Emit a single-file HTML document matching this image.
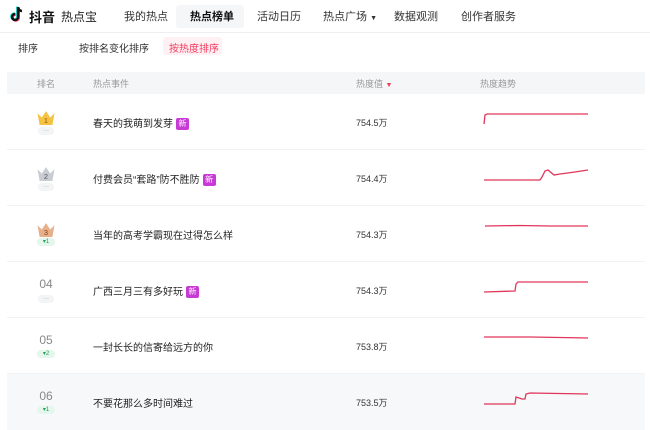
<!DOCTYPE html>
<html><head><meta charset="utf-8"><style>
*{margin:0;padding:0;box-sizing:border-box}
body{width:650px;height:430px;background:#fff;font-family:"Liberation Sans","Noto Sans CJK SC",sans-serif;color:#222;position:relative;overflow:hidden}
.a{position:absolute;white-space:nowrap}
.hdr{position:absolute;left:0;top:0;width:650px;height:33px;border-bottom:1px solid #eceef1}
.nav{font-size:11px;color:#333;top:8px}
.row{position:absolute;left:7px;width:638px;height:56px;border-bottom:1px solid #f1f2f4}
.ev{font-size:10px;color:#222}
.hv{font-size:9px;color:#333}
.new{display:inline-block;background:#c83ad6;color:#fff;font-size:8px;width:13px;height:12px;line-height:12px;text-align:center;border-radius:2px;margin-left:3px;vertical-align:1px}
.bd{position:absolute;width:16px;height:8px;border-radius:4px;background:#f3f4f6;font-size:6px;color:#999;text-align:center;line-height:8px}
.up{background:#e5f7ec;color:#1fa055}
.num{font-size:12px;color:#888;text-align:center;width:24px}
</style></head><body>
<div class="hdr"></div>
<svg class="a" style="left:10px;top:6px" width="14" height="17" viewBox="0 0 14 17"><path d="M8 1v10a3 3 0 1 1-3-3" fill="none" stroke="#25f4ee" stroke-width="2.4" transform="translate(-0.8,-0.5)"/><path d="M8 1v10a3 3 0 1 1-3-3" fill="none" stroke="#fe2c55" stroke-width="2.4" transform="translate(0.8,0.5)"/><path d="M8 1v10a3 3 0 1 1-3-3M8 1c0 2 2 4 4 4" fill="none" stroke="#111" stroke-width="2.4"/></svg>
<div class="a" style="left:29px;top:7px;font-size:13px;font-weight:bold;color:#111">抖音</div>
<div class="a" style="left:61px;top:8px;font-size:12px;color:#222">热点宝</div>
<div class="a nav" style="left:124px">我的热点</div>
<div class="a" style="left:176px;top:5px;width:68px;height:23px;background:#f5f6f8;border-radius:3px"></div>
<div class="a nav" style="left:190px;font-weight:bold;color:#111">热点榜单</div>
<div class="a nav" style="left:257px">活动日历</div>
<div class="a nav" style="left:323px">热点广场 <span style="font-size:7px">▼</span></div>
<div class="a nav" style="left:394px">数据观测</div>
<div class="a nav" style="left:461px">创作者服务</div>
<div class="a" style="left:18px;top:40px;font-size:10px;color:#333">排序</div>
<div class="a" style="left:79px;top:40px;font-size:10px;color:#333">按排名变化排序</div>
<div class="a" style="left:163px;top:37px;width:59px;height:18px;background:#fff1f3;border-radius:3px"></div>
<div class="a" style="left:169px;top:40px;font-size:10px;color:#f23a5e">按热度排序</div>
<div class="a" style="left:7px;top:72px;width:638px;height:22px;background:#f5f6f8"></div>
<div class="a" style="left:37px;top:77px;font-size:9px;color:#999">排名</div>
<div class="a" style="left:93px;top:77px;font-size:9px;color:#999">热点事件</div>
<div class="a" style="left:356px;top:77px;font-size:9px;color:#999">热度值 <span style="color:#f23a5e;font-size:7px">▼</span></div>
<div class="a" style="left:480px;top:77px;font-size:9px;color:#999">热度趋势</div>

<div class="row" style="top:94px"></div>
<div class="row" style="top:150px"></div>
<div class="row" style="top:206px"></div>
<div class="row" style="top:262px"></div>
<div class="row" style="top:318px"></div>
<div class="row" style="top:374px;background:#f7f8fa;border:none"></div>

<svg class="a" style="left:35px;top:109px" width="22" height="17" viewBox="0 0 20 16"><path d="M2 4l4 4 4-6 4 6 4-4-2 11H4z" fill="#f5c242"/><text x="10" y="13" font-size="7" text-anchor="middle" fill="#8a5a00" font-family="Liberation Sans">1</text></svg>
<div class="bd" style="left:38px;top:127px">···</div>
<svg class="a" style="left:35px;top:165px" width="22" height="17" viewBox="0 0 20 16"><path d="M2 4l4 4 4-6 4 6 4-4-2 11H4z" fill="#c9ccd2"/><text x="10" y="13" font-size="7" text-anchor="middle" fill="#555" font-family="Liberation Sans">2</text></svg>
<div class="bd" style="left:38px;top:183px">···</div>
<svg class="a" style="left:35px;top:221px" width="22" height="17" viewBox="0 0 20 16"><path d="M2 4l4 4 4-6 4 6 4-4-2 11H4z" fill="#e8b08a"/><text x="10" y="13" font-size="7" text-anchor="middle" fill="#7a4020" font-family="Liberation Sans">3</text></svg>
<div class="bd up" style="left:37px;top:238px;width:18px">▾1</div>
<div class="a num" style="left:34px;top:277px">04</div>
<div class="bd" style="left:38px;top:295px">···</div>
<div class="a num" style="left:34px;top:333px">05</div>
<div class="bd up" style="left:37px;top:350px;width:18px">▾2</div>
<div class="a num" style="left:34px;top:389px">06</div>
<div class="bd up" style="left:37px;top:406px;width:18px">▾1</div>

<div class="a ev" style="left:93px;top:115px">春天的我萌到发芽<span class="new">新</span></div>
<div class="a ev" style="left:93px;top:171px">付费会员“套路”防不胜防<span class="new">新</span></div>
<div class="a ev" style="left:93px;top:227px">当年的高考学霸现在过得怎么样</div>
<div class="a ev" style="left:93px;top:283px">广西三月三有多好玩<span class="new">新</span></div>
<div class="a ev" style="left:93px;top:339px">一封长长的信寄给远方的你</div>
<div class="a ev" style="left:93px;top:395px">不要花那么多时间难过</div>

<div class="a hv" style="left:356px;top:116px">754.5万</div>
<div class="a hv" style="left:356px;top:172px">754.4万</div>
<div class="a hv" style="left:356px;top:228px">754.3万</div>
<div class="a hv" style="left:356px;top:284px">754.3万</div>
<div class="a hv" style="left:356px;top:340px">753.8万</div>
<div class="a hv" style="left:356px;top:396px">753.5万</div>

<svg class="a" style="left:0;top:0" width="650" height="430"><g fill="none" stroke="#e0365a" stroke-width="1.3">
<path d="M484 124L485 115L487 114L588 114"/>
<path d="M484 180L540 180L542 177L545 171L548 170L554 175L560 174L575 172L588 170"/>
<path d="M485 226L520 225.5L550 226L588 226"/>
<path d="M484 292L515 291L516 284L518 282L588 282"/>
<path d="M484 337L530 337L560 337.5L588 338"/>
<path d="M484 404L515 404L516 397L522 399L525 399L526 394L530 393L588 394"/>
</g></svg>
</body></html>
